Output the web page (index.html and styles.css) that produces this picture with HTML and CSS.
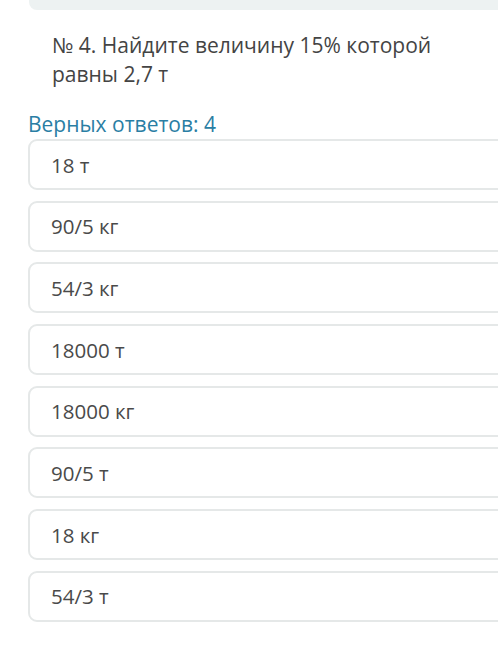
FILE: index.html
```html
<!DOCTYPE html>
<html lang="ru">
<head>
<meta charset="utf-8">
<link rel="stylesheet" href="styles.css">
</head>
<body>
<div class="topbar"></div>
<div class="question">№ 4. Найдите величину 15% которой равны 2,7 т</div>
<div class="count">Верных ответов: 4</div>
<div class="options">
  <div class="option">18 т</div>
  <div class="option">90/5 кг</div>
  <div class="option">54/3 кг</div>
  <div class="option">18000 т</div>
  <div class="option">18000 кг</div>
  <div class="option">90/5 т</div>
  <div class="option">18 кг</div>
  <div class="option">54/3 т</div>
</div>
</body>
</html>
```
FILE: styles.css
```css
html, body {
  margin: 0;
  padding: 0;
  background: #ffffff;
  font-family: "Open Sans", "Noto Sans", sans-serif;
  overflow: hidden;
}
body {
  width: 498px;
  height: 672px;
}
.topbar {
  margin-left: 29px;
  margin-right: -10px;
  height: 10px;
  background: #edf2f2;
  border-bottom-left-radius: 8px;
}
.question {
  margin: 21px 40px 0 52px;
  font-size: 21px;
  line-height: 29px;
  color: #444444;
}
.count {
  margin: 23px 0 0 28px;
  font-size: 21px;
  line-height: 24px;
  color: #2a7ea4;
}
.options {
  margin: 3px -20px 0 28px;
  display: flex;
  flex-direction: column;
  gap: 10.7px;
}
.option {
  box-sizing: border-box;
  height: 51px;
  border: 2px solid #e5e8e8;
  border-radius: 9px;
  padding-left: 21px;
  display: flex;
  align-items: center;
  font-size: 20.5px;
  color: #4a4a4a;
  background: #ffffff;
}
```
